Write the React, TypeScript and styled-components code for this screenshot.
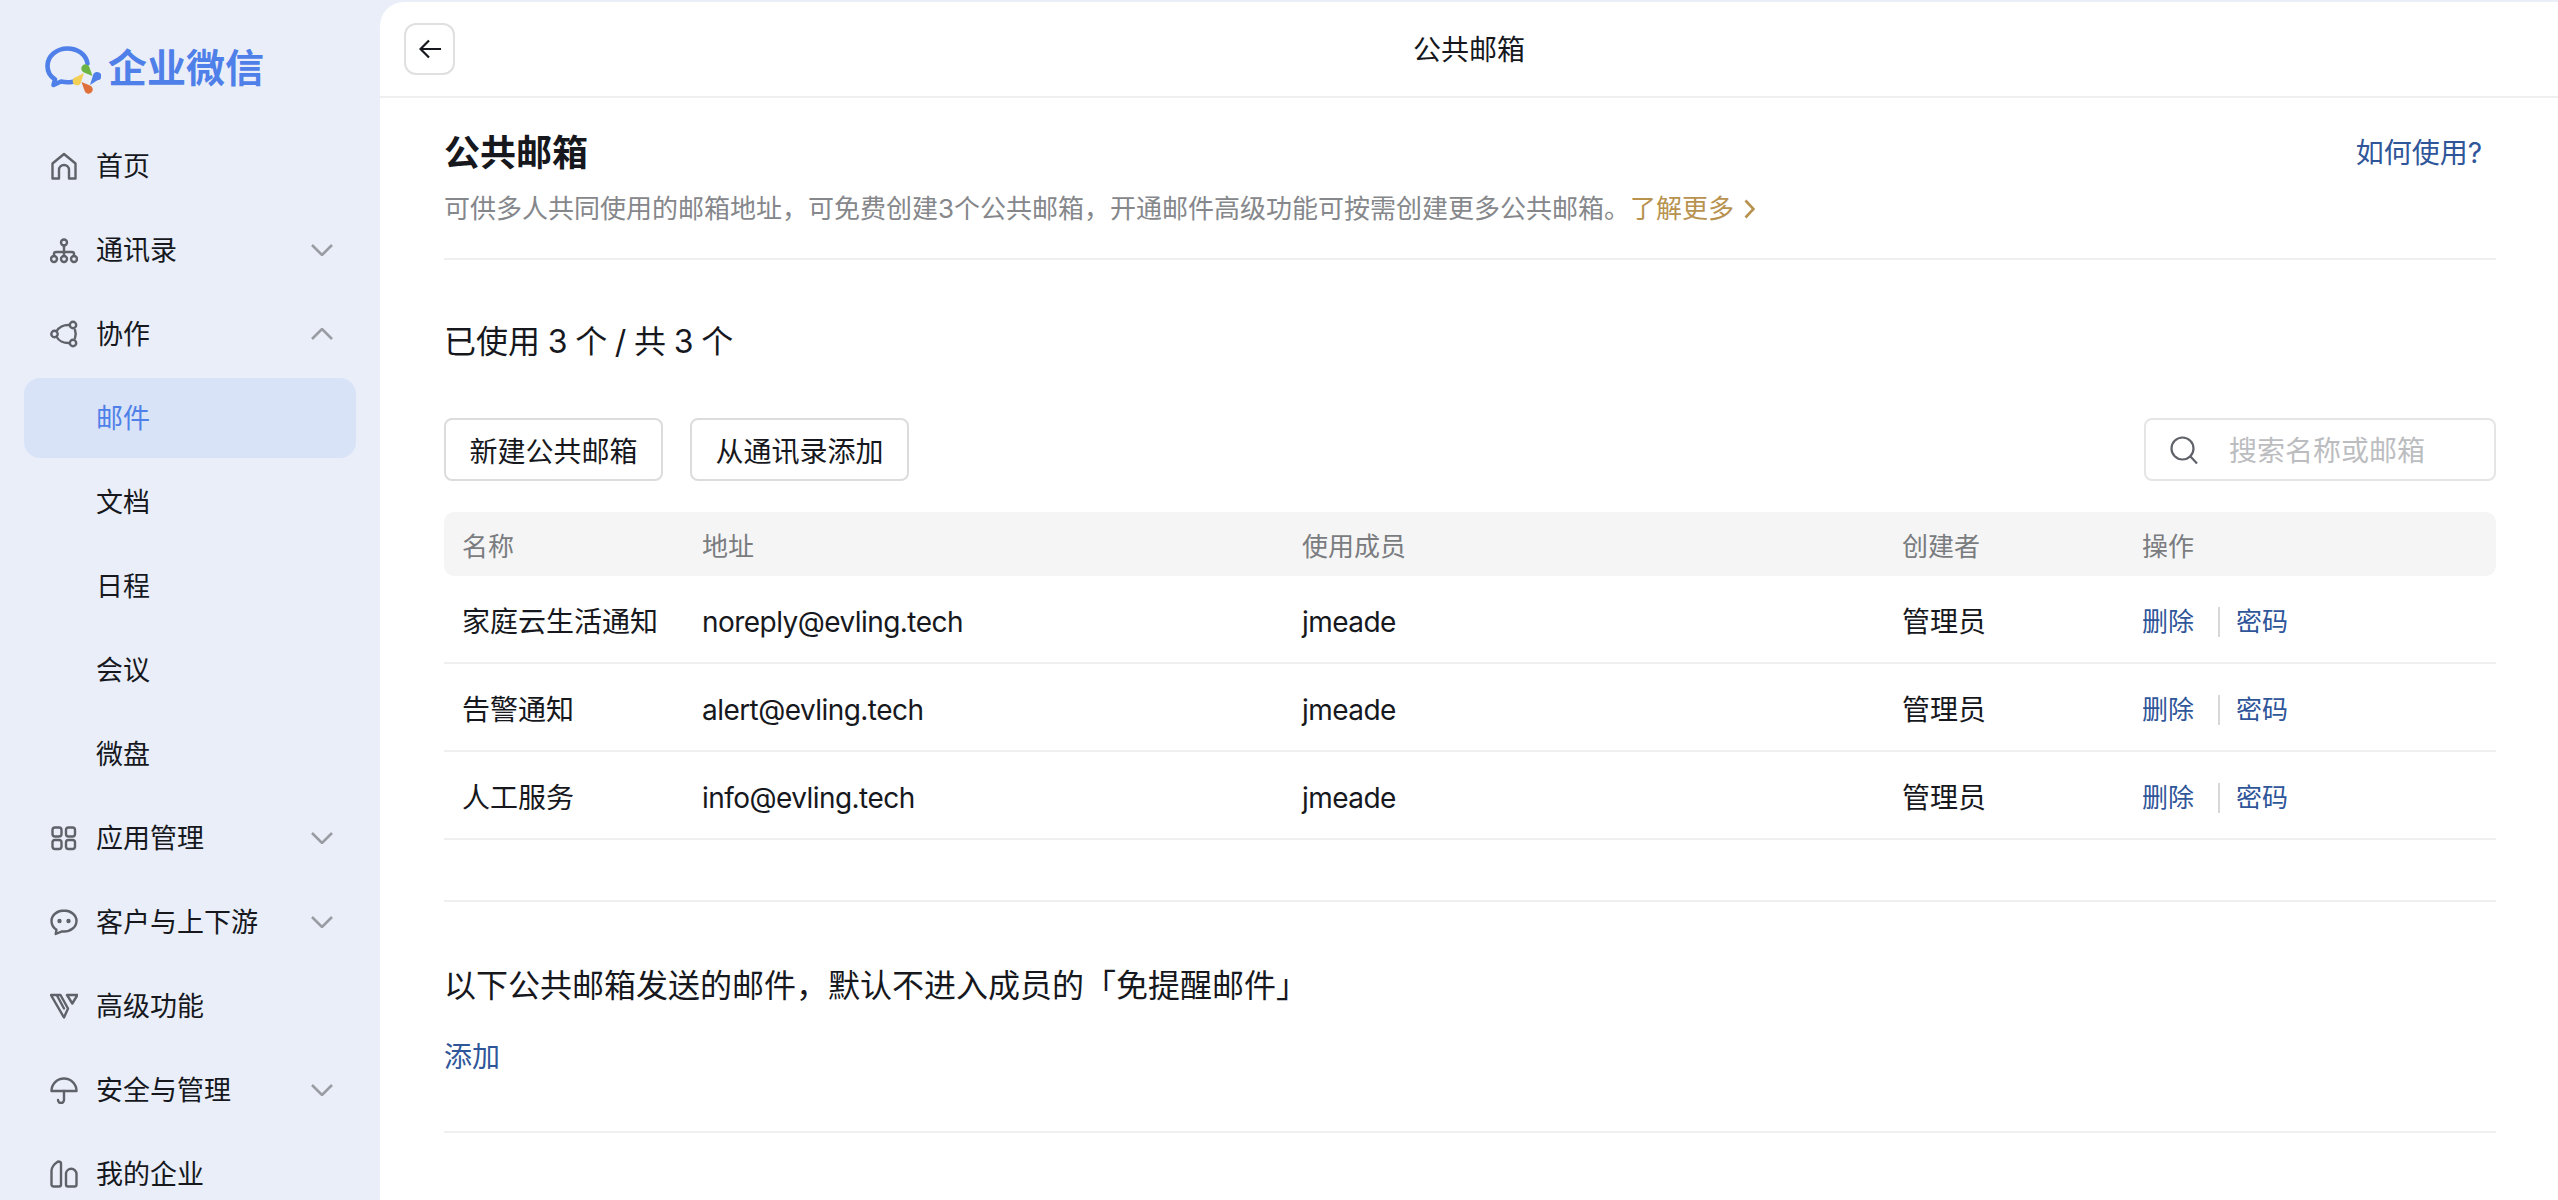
import React from 'react'
import styled, { createGlobalStyle } from 'styled-components'

const GlobalStyle = createGlobalStyle`
  html, body {
    margin: 0;
    padding: 0;
    height: 100%;
    overflow: hidden;
  }
  body {
    background: #e9eef9;
    color: #16181d;
    font-family: Inter, "Noto Sans CJK SC", sans-serif;
  }
  * {
    box-sizing: border-box;
  }
`

const Page = styled.div`
  display: flex;
  width: 2558px;
  height: 1200px;
  overflow: hidden;
`

const Sidebar = styled.aside`
  flex: 0 0 380px;
  background: #e9eef9;
`

const LogoRow = styled.div`
  display: flex;
  align-items: flex-start;
  gap: 7px;
  height: 126px;
  padding: 46px 0 0 45px;
`

const LogoText = styled.span`
  margin-top: -2px;
  font-size: 39px;
  line-height: 48px;
  font-weight: 700;
  color: #4f7fe8;
`

const Nav = styled.nav`
  display: flex;
  flex-direction: column;
  gap: 4px;
  padding: 0 24px;
`

const NavItem = styled.div<{ $active?: boolean; $sub?: boolean }>`
  display: flex;
  align-items: center;
  flex: 0 0 80px;
  height: 80px;
  padding: 0 23px 0 ${(p) => (p.$sub ? '72px' : '26px')};
  border-radius: 16px;
  font-size: 27px;
  color: ${(p) => (p.$active ? '#4f7fe8' : '#16181d')};
  background: ${(p) => (p.$active ? '#d8e3f7' : 'transparent')};
`

const NavIcon = styled.svg`
  flex: 0 0 28px;
  width: 28px;
  height: 28px;
  margin-right: 18px;
  fill: none;
  stroke: #5f6268;
  stroke-width: 2.4;
  stroke-linejoin: round;
  stroke-linecap: round;
`

const NavLabel = styled.span`
  flex: 1;
  padding-top: 2px;
  line-height: 40px;
`

const Chevron = styled.svg<{ $up?: boolean }>`
  width: 22px;
  height: 12px;
  fill: none;
  stroke: #9a9ca3;
  stroke-width: 2.6;
  transform: ${(p) => (p.$up ? 'rotate(180deg)' : 'none')};
`

const Main = styled.main`
  flex: 1;
  margin-top: 2px;
  background: #fff;
  border-top-left-radius: 24px;
`

const TopBar = styled.header`
  display: grid;
  grid-template-columns: 1fr auto 1fr;
  align-items: center;
  height: 96px;
  padding: 0 24px;
  border-bottom: 2px solid #efefef;
`

const BackButton = styled.button`
  display: flex;
  align-items: center;
  justify-content: center;
  width: 51px;
  height: 52px;
  padding: 0;
  background: #fff;
  border: 2px solid #e0e0e0;
  border-radius: 12px;
`

const TopTitle = styled.div`
  padding-top: 2px;
  font-size: 28px;
  line-height: 40px;
  color: #16181d;
`

const Content = styled.div`
  padding: 33px 62px 0 64px;
`

const TitleRow = styled.div`
  display: flex;
  align-items: center;
  justify-content: space-between;
  padding-right: 14px;
`

const Title = styled.h1`
  margin: 0;
  font-size: 36px;
  line-height: 44px;
  font-weight: 700;
  color: #16181d;
`

const HelpLink = styled.a`
  font-size: 28px;
  line-height: 44px;
  color: #2f5699;
`

const Subtitle = styled.p`
  display: flex;
  align-items: center;
  margin: 16px 0 0;
  font-size: 26px;
  line-height: 36px;
  color: #85878b;
`

const MoreLink = styled.a`
  display: inline-flex;
  align-items: center;
  gap: 10px;
  color: #b8924f;
`

const Divider = styled.div<{ $top: number }>`
  height: 2px;
  margin-top: ${(p) => p.$top}px;
  background: #efefef;
`

const Usage = styled.div`
  margin-top: 60px;
  font-size: 32px;
  line-height: 44px;
  word-spacing: -1.3px;
  color: #16181d;
`

const Toolbar = styled.div`
  display: flex;
  align-items: center;
  gap: 27px;
  margin-top: 54px;
`

const ActionButton = styled.button`
  width: 219px;
  height: 63px;
  padding: 0;
  background: #fff;
  border: 2px solid #dcdcdc;
  border-radius: 8px;
  font-family: inherit;
  font-size: 28px;
  color: #16181d;
`

const SearchBox = styled.label`
  display: flex;
  align-items: center;
  gap: 31px;
  width: 352px;
  height: 63px;
  margin-left: auto;
  padding-left: 24px;
  border: 2px solid #e5e5e5;
  border-radius: 8px;
`

const SearchInput = styled.input`
  flex: 1;
  min-width: 0;
  padding: 2px 0 0;
  border: 0;
  outline: 0;
  background: transparent;
  font-family: inherit;
  font-size: 28px;
  &::placeholder {
    color: #bcbdc0;
    opacity: 1;
  }
`

const columns = '240px 600px 600px 240px 1fr'

const Table = styled.div`
  margin-top: 31px;
`

const HeadRow = styled.div`
  display: grid;
  grid-template-columns: ${columns};
  align-items: center;
  height: 64px;
  padding-left: 18px;
  background: #f5f5f5;
  border-radius: 10px;
  font-size: 26px;
  color: #7a7c80;
`

const Row = styled.div`
  display: grid;
  grid-template-columns: ${columns};
  align-items: center;
  height: 88px;
  padding: 5px 0 0 18px;
  border-bottom: 2px solid #efefef;
  font-size: 28px;
  line-height: 40px;
  color: #16181d;
`

const LatinCell = styled.span`
  letter-spacing: -0.55px;
`

const Actions = styled.div`
  display: flex;
  align-items: center;
  font-size: 26px;
  color: #2f5699;
`

const ActionSep = styled.span`
  width: 2px;
  height: 30px;
  margin: 0 16px 0 24px;
  background: #d8d8d8;
`

const Notice = styled.div`
  margin-top: 62px;
  font-size: 32px;
  line-height: 44px;
  color: #16181d;
`

const AddLink = styled.a`
  display: block;
  margin-top: 29px;
  font-size: 28px;
  line-height: 40px;
  color: #2f5699;
`

const ChevronIcon = ({ up }: { up?: boolean }) => (
  <Chevron $up={up} viewBox="0 0 22 12">
    <path d="M1 1l10 10L21 1" />
  </Chevron>
)

const navIcons: Record<string, React.ReactNode> = {
  home: <path d="M2.5 26.5V11.5L14 2l11.5 9.500v15H19V18a5 5 0 0 0-10 0v8.500z" />,
  org: (
    <>
      <circle cx="14" cy="6.500" r="3" />
      <circle cx="4" cy="23" r="3" />
      <circle cx="14" cy="23" r="3" />
      <circle cx="24" cy="23" r="3" />
      <path d="M4 20v-2a2 2 0 0 1 2-2h16a2 2 0 0 1 2 2v2M14 9.500v10.500" />
    </>
  ),
  collab: (
    <>
      <circle cx="4.500" cy="14" r="3.200" />
      <circle cx="23" cy="5" r="3.200" />
      <circle cx="23" cy="23" r="3.200" />
      <path d="M6.500 11.200C8.500 7.500 13.500 4.500 19.800 5M6.500 16.800c2 3.700 7 6.700 13.300 6.200M25 10c.9 2.500.9 5.500 0 8" />
    </>
  ),
  apps: (
    <>
      <rect x="2.500" y="3.500" width="9" height="9" rx="2.500" />
      <rect x="16" y="3.500" width="9" height="9" rx="2.500" />
      <rect x="2.500" y="16" width="9" height="9" rx="2.500" />
      <rect x="16" y="16" width="9" height="9" rx="2.500" />
    </>
  ),
  chat: (
    <>
      <path d="M14 2.500C7.400 2.500 1.500 7 1.500 13c0 3.800 2 6.800 5 8.800l-.8 4.200 6.300-2.600c.7.100 1.300.100 2 .100 6.600 0 12.500-4.500 12.500-10.500S20.600 2.500 14 2.500z" />
      <circle cx="9.500" cy="13" r="1" fill="#5f6268" />
      <circle cx="18.500" cy="13" r="1" fill="#5f6268" />
    </>
  ),
  vip: (
    <>
      <path d="M1 3h9.500L18 16.500 14 25.500z" />
      <path d="M7 3.500l7 13" />
      <path d="M17 3h10.500l-5.200 8.500z" />
    </>
  ),
  umbrella: (
    <>
      <path d="M1.500 15a12.500 12.500 0 0 1 25 0z" />
      <path d="M14 15v9a3 3 0 0 1-6 0" />
    </>
  ),
  building: (
    <>
      <path d="M1.500 24.500V11C1.500 7.500 5 3.500 8 1.500c1.500 0 3 .5 3 2v21a2 2 0 0 1-2 2H3.500a2 2 0 0 1-2-2z" />
      <path d="M16 24.500V14a5 5 0 0 1 10.500 0v10.500a2 2 0 0 1-2 2H18a2 2 0 0 1-2-2z" />
    </>
  ),
}

type NavEntry = {
  label: string
  icon?: string
  chevron?: 'up' | 'down'
  active?: boolean
}

const navEntries: NavEntry[] = [
  { label: '首页', icon: 'home' },
  { label: '通讯录', icon: 'org', chevron: 'down' },
  { label: '协作', icon: 'collab', chevron: 'up' },
  { label: '邮件', active: true },
  { label: '文档' },
  { label: '日程' },
  { label: '会议' },
  { label: '微盘' },
  { label: '应用管理', icon: 'apps', chevron: 'down' },
  { label: '客户与上下游', icon: 'chat', chevron: 'down' },
  { label: '高级功能', icon: 'vip' },
  { label: '安全与管理', icon: 'umbrella', chevron: 'down' },
  { label: '我的企业', icon: 'building' },
]

const mailboxes = [
  { name: '家庭云生活通知', address: 'noreply@evling.tech' },
  { name: '告警通知', address: 'alert@evling.tech' },
  { name: '人工服务', address: 'info@evling.tech' },
]

const Logo = () => (
  <svg width="56" height="48" viewBox="0 0 56 48" fill="none">
    <path
      d="M42.500 17.500C41 8 32 2.500 22.500 2.500 11.500 2.500 2.500 10 2.500 20c0 6 3 10.500 7.500 13.500l-1.500 5.500 7.500-3.500c4 .9 8 1 12 .2"
      stroke="#4f7fe8"
      strokeWidth="4.600"
      strokeLinecap="round"
      strokeLinejoin="round"
    />
    <path d="M47.500 30L39 26.500a4.200 4.200 0 1 1 5.500-5z" fill="#6cb545" />
    <path d="M45 39l3-9.500a4.200 4.200 0 1 1 4.500 4.800z" fill="#4f7fe8" />
    <path d="M36.500 36l8.500 3.500a4.200 4.200 0 1 1-5.500 5z" fill="#e0703a" />
    <path d="M39 27l-3 9a4.200 4.200 0 1 1-4.800-5z" fill="#f2cf55" />
  </svg>
)

const App: React.FC = () => {
  return (
    <Page>
      <GlobalStyle />
      <Sidebar>
        <LogoRow>
          <Logo />
          <LogoText>企业微信</LogoText>
        </LogoRow>
        <Nav>
          {navEntries.map((entry) => (
            <NavItem key={entry.label} $active={entry.active} $sub={!entry.icon}>
              {entry.icon && <NavIcon viewBox="0 0 28 28">{navIcons[entry.icon]}</NavIcon>}
              <NavLabel>{entry.label}</NavLabel>
              {entry.chevron && <ChevronIcon up={entry.chevron === 'up'} />}
            </NavItem>
          ))}
        </Nav>
      </Sidebar>
      <Main>
        <TopBar>
          <BackButton aria-label="返回">
            <svg width="22" height="20" viewBox="0 0 22 20" fill="none" stroke="#16181d" strokeWidth="2.200">
              <path d="M22 10H2M10 1.500L1.500 10l8.500 8.500" />
            </svg>
          </BackButton>
          <TopTitle>公共邮箱</TopTitle>
        </TopBar>
        <Content>
          <TitleRow>
            <Title>公共邮箱</Title>
            <HelpLink>如何使用?</HelpLink>
          </TitleRow>
          <Subtitle>
            可供多人共同使用的邮箱地址，可免费创建3个公共邮箱，开通邮件高级功能可按需创建更多公共邮箱。
            <MoreLink>
              了解更多
              <svg width="11" height="20" viewBox="0 0 11 20" fill="none" stroke="#b8924f" strokeWidth="2.600">
                <path d="M1.500 1.500L9.500 10l-8 8.500" />
              </svg>
            </MoreLink>
          </Subtitle>
          <Divider $top={31} />
          <Usage>已使用 3 个 / 共 3 个</Usage>
          <Toolbar>
            <ActionButton>新建公共邮箱</ActionButton>
            <ActionButton>从通讯录添加</ActionButton>
            <SearchBox>
              <svg width="28" height="28" viewBox="0 0 28 28" fill="none" stroke="#5f6268" strokeWidth="2.200">
                <circle cx="12.500" cy="12.500" r="11" />
                <path d="M20.500 20.500l6.500 7" />
              </svg>
              <SearchInput placeholder="搜索名称或邮箱" />
            </SearchBox>
          </Toolbar>
          <Table>
            <HeadRow>
              <span>名称</span>
              <span>地址</span>
              <span>使用成员</span>
              <span>创建者</span>
              <span>操作</span>
            </HeadRow>
            {mailboxes.map((box) => (
              <Row key={box.address}>
                <span>{box.name}</span>
                <LatinCell>{box.address}</LatinCell>
                <LatinCell>jmeade</LatinCell>
                <span>管理员</span>
                <Actions>
                  <a>删除</a>
                  <ActionSep />
                  <a>密码</a>
                </Actions>
              </Row>
            ))}
          </Table>
          <Divider $top={60} />
          <Notice>以下公共邮箱发送的邮件，默认不进入成员的「免提醒邮件」</Notice>
          <AddLink>添加</AddLink>
          <Divider $top={54} />
        </Content>
      </Main>
    </Page>
  )
}

export default App
